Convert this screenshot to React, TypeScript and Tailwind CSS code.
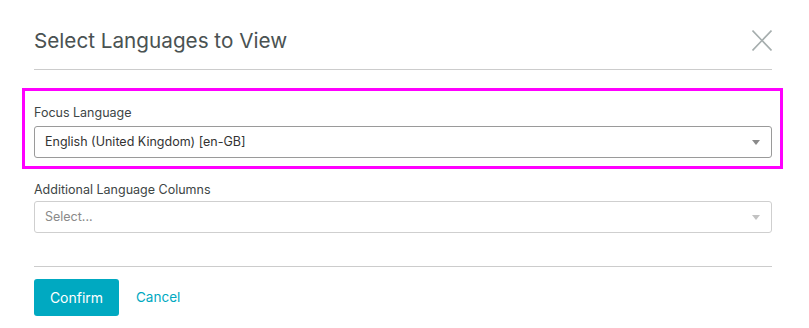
const font = { fontFamily: "Inter, 'Noto Sans', 'Liberation Sans', sans-serif" };

interface SelectBoxProps {
  value?: string;
  placeholder?: string;
  strong?: boolean;
}

const SelectBox = ({ value, placeholder, strong }: SelectBoxProps) => (
  <div
    className={`flex h-8 items-center justify-between rounded-[3px] border bg-white pl-[10px] pr-[11px] ${
      strong ? "border-[#9a9a9a]" : "border-[#cfcfcf]"
    }`}
  >
    {value ? (
      <span className="text-[12.5px] text-[#333]">{value}</span>
    ) : (
      <span className="text-[12.5px] text-[#8a8a8a]">{placeholder}</span>
    )}
    <span
      className={`h-0 w-0 border-x-[4.5px] border-t-[5px] border-x-transparent ${
        strong ? "border-t-[#8a8a8a]" : "border-t-[#c2c2c2]"
      }`}
    />
  </div>
);

export default function App() {
  return (
    <div className="h-[328px] w-[809px] overflow-hidden bg-white pl-[34px] pr-[37px]" style={font}>
      <div className="flex items-start justify-between border-b border-[#cccccc] pb-[14px] pt-[27px]">
        <h1 className="text-[20.7px] leading-[28px] text-[#4a5252]">Select Languages to View</h1>
        <button className="mt-[3px] text-[#a6aeae]" aria-label="Close">
          <svg width="20" height="21" viewBox="0 0 20 21" fill="none" stroke="currentColor" strokeWidth="1.6">
            <path d="M0.5 0.5 L19.5 20.5 M19.5 0.5 L0.5 20.5" />
          </svg>
        </button>
      </div>

      <div className="-ml-3 -mr-[11px] mt-[18px] border-[3px] border-[#ff00ff] pb-2 pl-[9px] pr-2 pt-[13px]">
        <label className="block text-[12.5px] leading-[18px] text-[#3d4545]">Focus Language</label>
        <div className="mt-1">
          <SelectBox value="English (United Kingdom) [en-GB]" strong />
        </div>
      </div>

      <div className="mt-3">
        <label className="block text-[12.5px] leading-[18px] text-[#3d4545]">Additional Language Columns</label>
        <div className="mt-[2px]">
          <SelectBox placeholder="Select..." />
        </div>
      </div>

      <div className="mt-[33px] border-t border-[#cccccc]" />

      <div className="mt-3 flex items-center gap-[17px]">
        <button className="h-[37px] w-[85px] rounded-[3px] bg-[#00a9c1] text-[14px] text-white">Confirm</button>
        <button className="text-[13.5px] text-[#00a9c1]">Cancel</button>
      </div>
    </div>
  );
}
